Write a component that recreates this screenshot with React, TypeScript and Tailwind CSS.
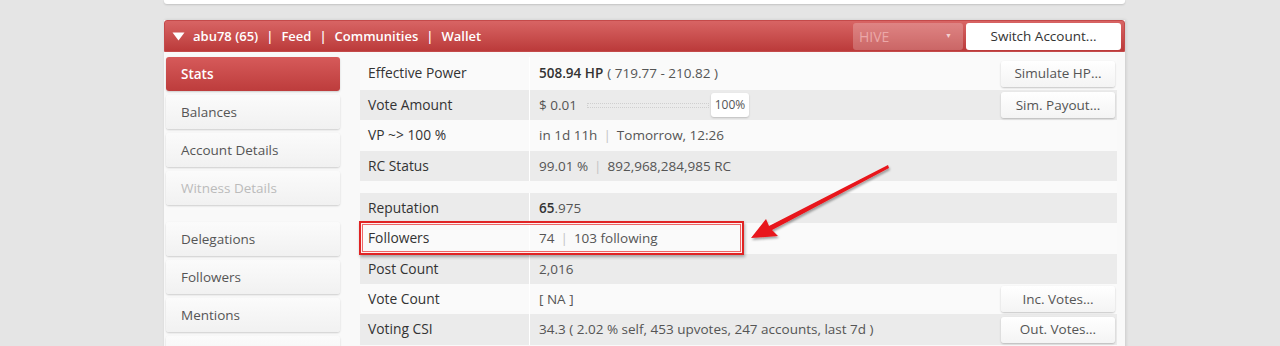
import React from 'react';

const navItems = [
  { label: 'Stats', active: true },
  { label: 'Balances' },
  { label: 'Account Details' },
  { label: 'Witness Details', disabled: true, gapAfter: true },
  { label: 'Delegations' },
  { label: 'Followers' },
  { label: 'Mentions' },
  { label: '' },
];

function Sep() {
  return <span className="mx-[6px] text-[#c4c4c4]">|</span>;
}

function SideButton({ children }: { children: React.ReactNode }) {
  return (
    <button className="h-[26px] w-[114px] rounded-[3px] bg-gradient-to-b from-white to-[#f4f4f4] text-[13.5px] text-[#555] shadow-[0_1px_2px_rgba(0,0,0,0.22)]">
      {children}
    </button>
  );
}

type Row = { label?: string; value?: React.ReactNode; action?: string; h: number };

const rows: Row[] = [
  {
    label: 'Effective Power',
    value: (
      <>
        <span className="font-semibold text-[#333]">508.94 HP</span>
        <span className="ml-[4px]">( 719.77 - 210.82 )</span>
      </>
    ),
    action: 'Simulate HP...',
    h: 33,
  },
  {
    label: 'Vote Amount',
    value: (
      <div className="flex items-center">
        <span>$ 0.01</span>
        <div className="ml-[10px] h-[5px] w-[122px] border border-dotted border-[#cfcfcf]" />
        <div className="ml-[2px] flex h-[24px] w-[38px] items-center justify-center rounded-[3px] bg-white text-[12px] text-[#555] shadow-[0_1px_2px_rgba(0,0,0,0.2)]">
          100%
        </div>
      </div>
    ),
    action: 'Sim. Payout...',
    h: 30,
  },
  {
    label: 'VP ~> 100 %',
    value: (
      <>
        in 1d 11h<Sep />Tomorrow, 12:26
      </>
    ),
    h: 31,
  },
  {
    label: 'RC Status',
    value: (
      <>
        99.01 %<Sep />892,968,284,985 RC
      </>
    ),
    h: 30,
  },
  { h: 12 },
  {
    label: 'Reputation',
    value: (
      <>
        <span className="font-semibold text-[#333]">65</span>.975
      </>
    ),
    h: 30,
  },
  {
    label: 'Followers',
    value: (
      <>
        74<Sep />103 following
      </>
    ),
    h: 31,
  },
  { label: 'Post Count', value: '2,016', h: 30 },
  { label: 'Vote Count', value: '[ NA ]', action: 'Inc. Votes...', h: 30 },
  {
    label: 'Voting CSI',
    value: '34.3 ( 2.02 % self, 453 upvotes, 247 accounts, last 7d )',
    action: 'Out. Votes...',
    h: 31,
  },
];

export default function App() {
  return (
    <div className="relative h-[346px] overflow-hidden bg-[#e5e5e5] font-['Open_Sans',sans-serif]">
      <div className="ml-[164px] w-[961px]">
        {/* top panel remnant */}
        <div className="h-[4px] rounded-b-[3px] bg-white shadow-[0_1px_2px_rgba(0,0,0,0.15)]" />

        <div className="mt-[16px] bg-[#f9f9f9] shadow-[1px_0_3px_rgba(0,0,0,0.12)]">
          {/* Header */}
          <div className="flex h-[32px] items-center rounded-t-[3px] border border-[#c44a4a] bg-gradient-to-b from-[#d86464] to-[#bb3a3a] pl-[7px] pr-[3px]">
            <svg width="13" height="9" viewBox="0 0 13 9" className="mr-[8px] mt-[1px]">
              <path d="M0.5 0.5 L12.5 0.5 L6.5 8.5 Z" fill="#fff" />
            </svg>
            <div className="flex items-center pt-[1px] text-[13px] font-semibold text-white">
              <span>abu78 (65)</span>
              <span className="mx-[8px]">|</span>
              <span>Feed</span>
              <span className="mx-[8px]">|</span>
              <span>Communities</span>
              <span className="mx-[8px]">|</span>
              <span>Wallet</span>
            </div>
            <div className="ml-auto flex items-center">
              <div className="flex h-[27px] w-[110px] items-center justify-between rounded-[3px] bg-[rgba(255,255,255,0.22)] pl-[6px] pr-[11px] text-[14px] text-[#eba8a8]">
                <span>HIVE</span>
                <span className="text-[7px] text-[#f3d0d0]">▼</span>
              </div>
              <button className="ml-[3px] h-[27px] w-[155px] rounded-[3px] bg-white text-[13.5px] text-[#333]">
                Switch Account...
              </button>
            </div>
          </div>

          {/* Body */}
          <div className="flex pb-[4px] pl-[2px] pr-[8px] pt-[4px]">
            <div className="w-[174px] pt-[1px]">
              {navItems.map((n, i) => (
                <div
                  key={i}
                  className={
                    'flex h-[34px] items-center rounded-[3px] pl-[15px] text-[13.5px] shadow-[0_1px_2px_rgba(0,0,0,0.18)] ' +
                    (n.active
                      ? 'bg-gradient-to-b from-[#d65a5a] to-[#bd3c3c] font-semibold text-white '
                      : n.disabled
                        ? 'bg-gradient-to-b from-[#fbfbfb] to-[#f1f1f1] text-[#bbb] '
                        : 'bg-gradient-to-b from-[#fbfbfb] to-[#f1f1f1] text-[#555] ') +
                    (n.gapAfter ? 'mb-[17px]' : 'mb-[4px]')
                  }
                >
                  {n.label}
                </div>
              ))}
            </div>

            <div className="ml-[20px] w-[757px] pt-[1px]">
              {rows.map((r, i) => (
                <div
                  key={i}
                  style={{ height: r.h }}
                  className={
                    'flex items-center ' + (i % 2 === 1 ? 'bg-[#ebebeb]' : 'bg-[#fafafa]')
                  }
                >
                  {r.label !== undefined && (
                    <>
                      <div className="flex h-full w-[170px] items-center border-r border-white pl-[8px] text-[13.8px] text-[#333]">
                        {r.label}
                      </div>
                      <div className="flex flex-1 items-center pl-[9px] text-[13.5px] text-[#555]">{r.value}</div>
                      {r.action && (
                        <div className="pr-[2px]">
                          <SideButton>{r.action}</SideButton>
                        </div>
                      )}
                    </>
                  )}
                </div>
              ))}
            </div>
          </div>
        </div>
      </div>

      {/* annotation */}
      <div className="absolute left-[359px] top-[221px] h-[34px] w-[385px] border-2 border-[#e02424] shadow-[1px_2px_3px_rgba(0,0,0,0.3),inset_0_0_0_1px_rgba(255,255,255,0.9),inset_0_0_0_2px_#e66]" />
      <svg className="absolute left-0 top-0" width="1280" height="346" viewBox="0 0 1280 346">
        <defs>
          <filter id="sh" x="-20%" y="-20%" width="140%" height="140%">
            <feDropShadow dx="1" dy="2" stdDeviation="1.2" floodColor="#000" floodOpacity="0.35" />
          </filter>
        </defs>
        <g filter="url(#sh)">
          <polygon
            points="888,165 889,168 772,230 778,236 751,238 766,219 769,226"
            fill="#e8141a"
          />
        </g>
      </svg>
    </div>
  );
}
